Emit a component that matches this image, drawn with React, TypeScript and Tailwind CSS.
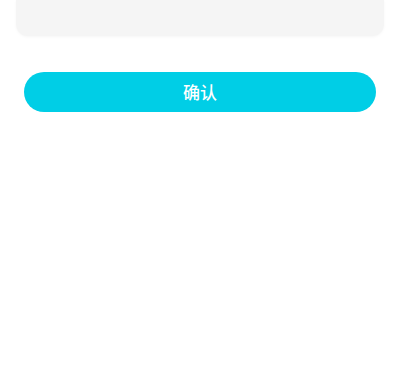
export default function App() {
  return (
    <div className="w-[400px] h-[368px] bg-white flex flex-col" style={{ fontFamily: '"Noto Sans CJK SC", "Noto Sans", sans-serif' }}>
      <div className="mx-4 h-9 shrink-0 bg-[#f5f5f5] rounded-b-xl shadow-[0_1px_3px_rgba(0,0,0,0.04)]" />
      <div className="px-6 mt-9">
        <button className="w-full h-10 rounded-full bg-[#00cee6] text-white text-[17px] font-medium flex items-center justify-center">
          确认
        </button>
      </div>
    </div>
  )
}
